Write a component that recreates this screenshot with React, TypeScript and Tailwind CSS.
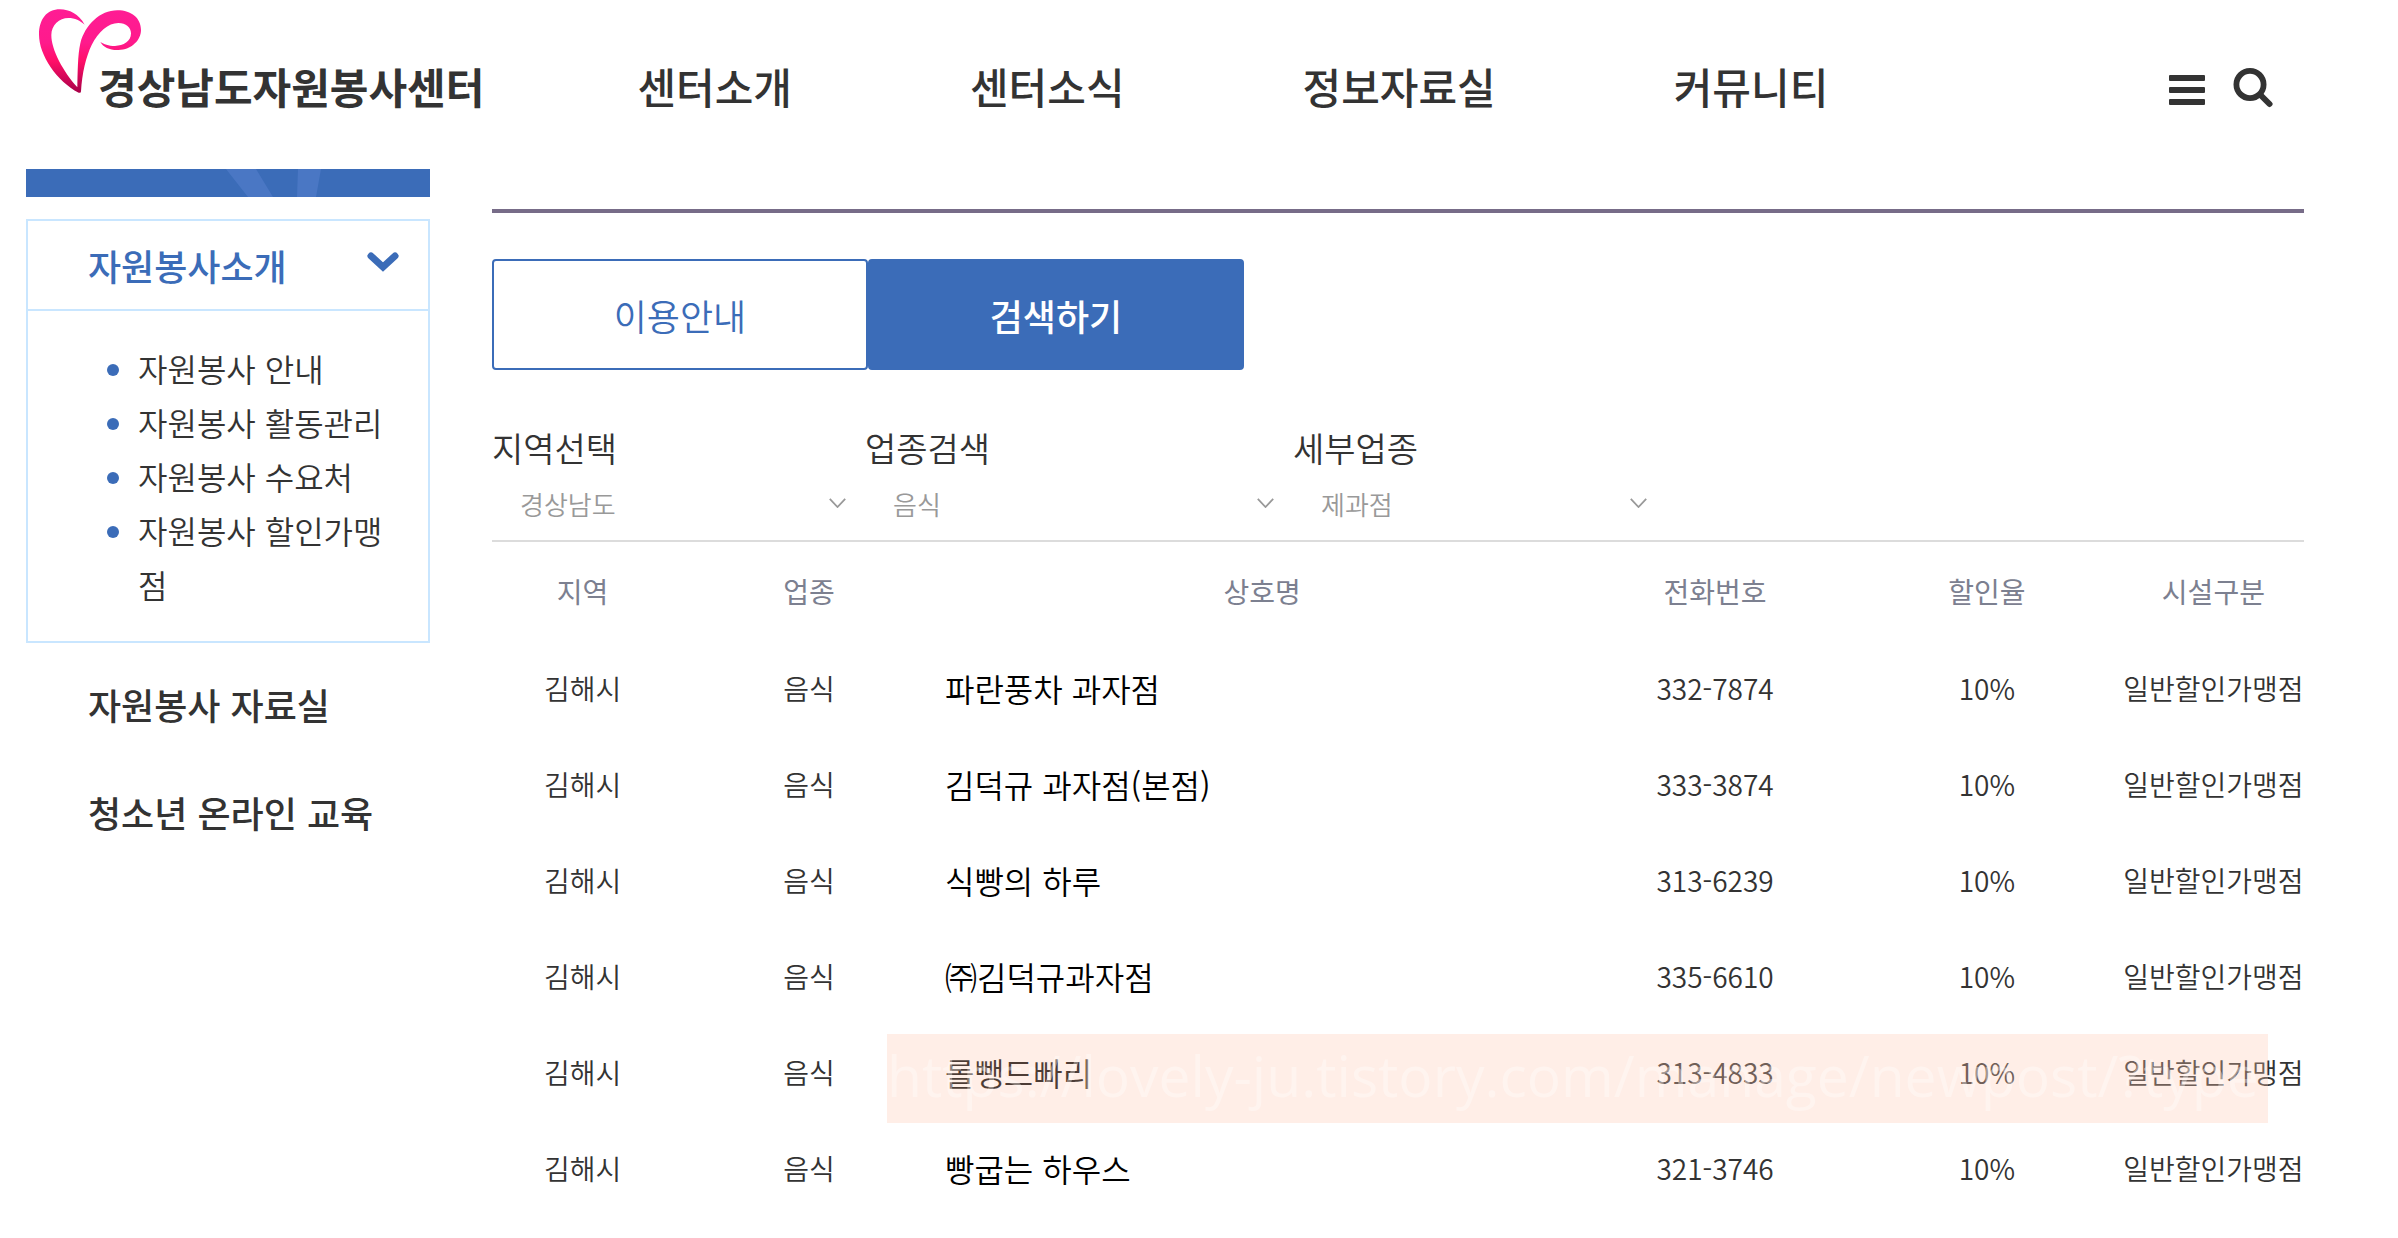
import clsx from 'clsx';
import React from 'react';

type Shop = {
  name: string;
  phone: string;
};

function App(): React.JSX.Element {
  return (
    <div
      lang="ko"
      className="min-h-screen bg-white text-[#333] font-[350] font-['Noto_Sans_CJK_KR','Noto_Sans',sans-serif]"
    >
      <Header />
      <div className="flex items-start gap-[62px] pl-[26px] pr-[94px]">
        <Sidebar />
        <main className="min-w-0 flex-1 pt-10">
          <div className="border-t-4 border-[#776c88] pt-[46px]">
            <Tabs />
            <Filters />
            <ShopTable />
          </div>
        </main>
      </div>
    </div>
  );
}

export default App;

function Header() {
  const navLinks = ['센터소개', '센터소식', '정보자료실', '커뮤니티'];
  return (
    <header className="flex h-[169px] items-start pl-[39px] pr-[125px]">
      <a href="#" className="flex shrink-0 items-start">
        <HeartLogo />
        <span className="-ml-[43px] mt-[54px] text-[42px] leading-[64px] font-bold whitespace-nowrap">
          경상남도자원봉사센터
        </span>
      </a>
      <nav className="ml-[153px] mt-[54px] flex gap-[178px]">
        {navLinks.map((label) => (
          <a key={label} href="#" className="text-[42px] leading-[64px] font-medium whitespace-nowrap">
            {label}
          </a>
        ))}
      </nav>
      <div className="ml-auto mt-[68px] flex items-start gap-7">
        <button type="button" aria-label="전체메뉴">
          <svg width="36" height="40" viewBox="0 0 36 40" fill="#333">
            <rect y="7" width="36" height="6" rx="1" />
            <rect y="19" width="36" height="6" rx="1" />
            <rect y="31" width="36" height="6" rx="1" />
          </svg>
        </button>
        <button type="button" aria-label="검색">
          <svg width="40" height="40" viewBox="0 0 40 40" fill="none" stroke="#333" strokeLinecap="round">
            <circle cx="17" cy="16.5" r="13.6" strokeWidth="5.8" />
            <path d="M28 27.5L36.5 36" strokeWidth="6" />
          </svg>
        </button>
      </div>
    </header>
  );
}

function HeartLogo() {
  return (
    <svg className="mt-[9px]" width="102" height="84" viewBox="117 27 306 252">
      <defs>
        <linearGradient id="heart" x1="0" y1="0" x2="0" y2="1">
          <stop offset="0" stopColor="#ff1c94" />
          <stop offset="0.4" stopColor="#ff1a8c" />
          <stop offset="0.62" stopColor="#ff0f68" />
          <stop offset="1" stopColor="#a80048" />
        </linearGradient>
      </defs>
      <path
        fill="url(#heart)"
        d="M254 74C236 42 208 28 180 28C140 28 117 58 117 104C117 165 170 243 236 278Q243 280 243 274C246 220 258 170 275 135C295 95 325 69 355 69C378 69 393 82 393 100C393 125 370 137 345 138C325 138 312 132 301 126C310 142 330 151 355 150C395 149 423 120 423 90C423 55 395 31 352 31C300 31 255 75 241 130C233 165 233 220 232 262C190 215 154 150 154 105C154 75 178 54 205 54C225 54 240 62 254 74Z"
      />
    </svg>
  );
}

function Sidebar() {
  const subMenus = ['자원봉사 안내', '자원봉사 활동관리', '자원봉사 수요처', '자원봉사 할인가맹점'];
  const menus = ['자원봉사 자료실', '청소년 온라인 교육'];
  return (
    <aside className="w-[404px] shrink-0">
      <svg className="block h-7 w-full bg-[#3b6cb8]" viewBox="0 0 404 28" fill="#4a77c4">
        <path d="M200 0H230L247 28H222ZM272 0H295L290 28H271Z" />
      </svg>
      <div className="mt-[22px] border-2 border-[#c9e6ff]">
        <a
          href="#"
          className="flex h-[90px] items-center justify-between border-b-2 border-[#c9e6ff] pl-[60px] pr-[29px] text-[36px] font-medium text-[#3b6cb8]"
        >
          자원봉사소개
          <svg width="32" height="30" viewBox="0 0 32 30" fill="none" stroke="#3b6cb8">
            <path d="M4 6L16 17L28 6" strokeWidth="7" strokeLinecap="round" />
          </svg>
        </a>
        <ul className="py-[30px] pl-[110px] pr-5 text-[32px] leading-[54px]">
          {subMenus.map((label) => (
            <li key={label} className="relative">
              <span className="absolute -left-[31px] top-[23px] size-3 rounded-full bg-[#3b6cb8]" />
              <a href="#">{label}</a>
            </li>
          ))}
        </ul>
      </div>
      <ul className="mt-[7px] pl-[62px] text-[36px] leading-[108px] font-medium">
        {menus.map((label) => (
          <li key={label}>
            <a href="#">{label}</a>
          </li>
        ))}
      </ul>
    </aside>
  );
}

function Tabs() {
  return (
    <div className="flex h-[111px]">
      {['이용안내', '검색하기'].map((label, i) => (
        <button
          key={label}
          type="button"
          className={clsx(
            'w-[376px] rounded border-2 border-[#3b6cb8] text-[36px]',
            i === 1 ? 'bg-[#3b6cb8] font-medium text-white' : 'bg-white text-[#3b6cb8]',
          )}
        >
          {label}
        </button>
      ))}
    </div>
  );
}

function Filters() {
  return (
    <form className="mt-[54px] flex border-b-2 border-[#dcdcdc] pb-1.5">
      <Filter id="region" label="지역선택" value="경상남도" className="w-[373px]" />
      <Filter id="category" label="업종검색" value="음식" className="w-[428px]" />
      <Filter id="detail" label="세부업종" value="제과점" className="w-[373px]" />
    </form>
  );
}

type FilterProps = {
  id: string;
  label: string;
  value: string;
  className: string;
};

function Filter({ id, label, value, className }: FilterProps) {
  return (
    <div className={className}>
      <label htmlFor={id} className="block text-[34px] leading-[48px]">
        {label}
      </label>
      <div className="relative">
        <select id={id} className="block h-[62px] w-full appearance-none pl-7 text-[26px] text-[#999]">
          <option>{value}</option>
        </select>
        <svg
          className="pointer-events-none absolute right-[19px] top-[26px]"
          width="17"
          height="10"
          viewBox="0 0 17 10"
          fill="none"
          stroke="#999"
          strokeWidth="1.8"
        >
          <path d="M0.8 0.8L8.5 9L16.2 0.8" />
        </svg>
      </div>
    </div>
  );
}

function ShopTable() {
  const shops: Shop[] = [
    { name: '파란풍차 과자점', phone: '332-7874' },
    { name: '김덕규 과자점(본점)', phone: '333-3874' },
    { name: '식빵의 하루', phone: '313-6239' },
    { name: '㈜김덕규과자점', phone: '335-6610' },
    { name: '롤뺑드빠리', phone: '313-4833' },
    { name: '빵굽는 하우스', phone: '321-3746' },
  ];
  return (
    <div className="relative">
      <table className="w-full table-fixed text-center text-[28px] whitespace-nowrap">
        <thead>
          <tr className="h-[98px] text-[#7c8090]">
            <th className="w-[10%] font-normal">지역</th>
            <th className="w-[15%] font-normal">업종</th>
            <th className="w-[35%] font-normal">상호명</th>
            <th className="w-[15%] font-normal">전화번호</th>
            <th className="w-[15%] font-normal">할인율</th>
            <th className="w-[10%] font-normal">시설구분</th>
          </tr>
        </thead>
        <tbody>
          {shops.map(({ name, phone }) => (
            <tr key={name} className="h-24">
              <td>김해시</td>
              <td>음식</td>
              <td className="text-left text-[32px] text-black">
                <a href="#">{name}</a>
              </td>
              <td>{phone}</td>
              <td>10%</td>
              <td>일반할인가맹점</td>
            </tr>
          ))}
        </tbody>
      </table>
      <div className="pointer-events-none absolute left-[395px] right-[36px] top-[492px] h-[89px] overflow-hidden bg-[#ffc6af]/30 font-['Open_Sans',sans-serif] text-[57px] leading-[82px] font-normal whitespace-nowrap text-white/35">
        https://lovely-ju.tistory.com/manage/newpost/?type
      </div>
    </div>
  );
}
